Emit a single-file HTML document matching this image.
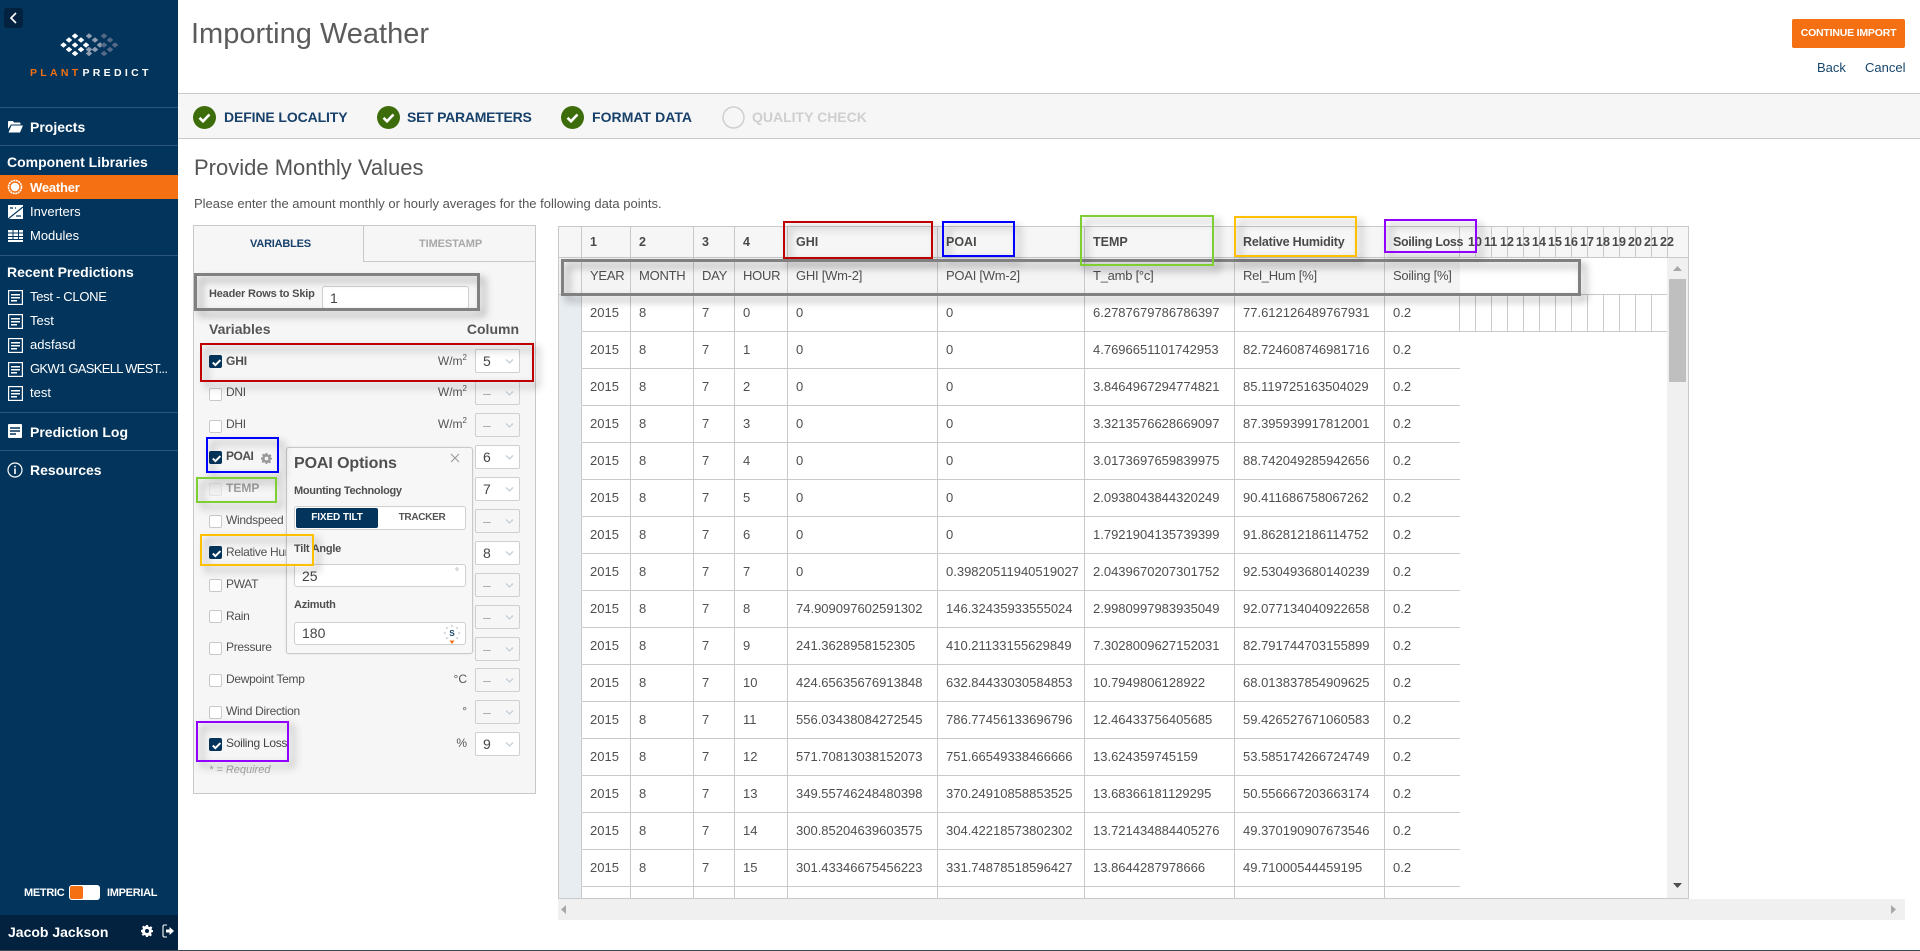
<!DOCTYPE html>
<html lang="en">
<head>
<meta charset="utf-8">
<title>Importing Weather</title>
<style>
*{box-sizing:border-box}
html,body{margin:0;padding:0;width:1920px;height:951px;overflow:hidden;background:#fff}
body{font-family:"Liberation Sans",sans-serif;color:#4a4a4a;position:relative}
.t{position:absolute;white-space:nowrap;line-height:20px}
.abs{position:absolute}
#side{position:absolute;left:0;top:0;width:178px;height:950px;background:#03345b;color:#fff}
#side .t{color:#fff}
#side .h{font-weight:bold;font-size:14px}
#side .i{font-size:13px}
.ln{position:absolute;left:0;width:178px;height:1px;background:#2c557a}
.ico{position:absolute}
.box{position:absolute;background:transparent;border-style:solid;filter:drop-shadow(5px 5px 4px rgba(0,0,0,.38))}
.lab{font-size:14px;font-weight:bold;color:#17406a}
#panel{position:absolute;left:193px;top:225px;width:343px;height:569px;background:#f6f6f6;border:1px solid #c9c9c9}
.cb{position:absolute;left:209px;width:13px;height:13px;border-radius:2px;background:#fff;border:1px solid #c9c9c9}
.cb.on{background:#03345b;border-color:#03345b}
.cb svg{position:absolute;left:1px;top:1px}
.rl{font-size:12px;color:#4f4f4f;left:226px;letter-spacing:-.3px}
.un{font-size:12px;color:#555;right:1453px}
.un sup{font-size:8px;line-height:0}
.sel{position:absolute;left:475px;width:45px;height:24px;border:1px solid #cfcfcf;border-radius:2px;background:#fff;font-size:14px;line-height:22px;padding-left:7px;color:#444}
.sel.off{background:#f6f6f6;color:#aaa}
.sel svg{position:absolute;left:29px;top:8px}
#pop{position:absolute;left:286px;top:447px;width:187px;height:207px;background:#f7f7f7;border:1px solid #c9c9c9;border-radius:3px;box-shadow:0 0 2px rgba(0,0,0,.1)}
.inp{position:absolute;background:#fff;border:1px solid #cfcfcf;border-radius:3px}
.pl{font-size:11px;font-weight:bold;color:#4f4f4f;letter-spacing:-.25px}
#grid{position:absolute;left:558px;top:226px;width:1131px;height:673px;border:1px solid #c9c9c9;overflow:hidden;background:#fff}
#grid .hd{position:absolute;left:0;top:0;width:1130px;height:31px;background:#f6f6f6;border-bottom:1px solid #c9c9c9}
#grid table{position:absolute;left:0;top:0;border-collapse:separate;border-spacing:0;table-layout:fixed;width:1108px;font-size:13px;color:#4f4f4f}
#grid td{padding:0 0 0 8px;border-right:1px solid #c9c9c9;border-bottom:1px solid #c9c9c9;white-space:nowrap;overflow:visible;height:37px;line-height:20px}
#grid tr td:first-child{background:#e8edf1;padding:0;border-bottom-color:#e8edf1}
#grid tr.h1 td{height:31px;font-weight:bold;background:#f6f6f6;font-size:12.5px;color:#4a4a4a}
#grid tr.h1 td:first-child{background:#f6f6f6;border-bottom-color:#c9c9c9}
#grid tr.h2 td{background:#f4f4f4;letter-spacing:-.25px}
#grid tr.h2 td:first-child{background:#f4f4f4;border-bottom-color:#c9c9c9}
#grid tr.h2 td.e{background:#fff;border-right:0}
#grid tr.d td:nth-child(10){border-right:0}
#vs{position:absolute;left:1108px;top:31px;width:21px;height:640px;background:#f0f0f0}
</style>
</head>
<body>

<div id="side">
  <div class="abs" style="left:4px;top:8px;width:19px;height:20px;background:#02223f;border-radius:3px"></div>
  <svg class="ico" style="left:9px;top:11px" width="9" height="14" viewBox="0 0 9 14"><path d="M7 2 L2 7 L7 12" fill="none" stroke="#fff" stroke-width="1.7"/></svg>
  <svg class="ico" style="left:58px;top:31px" width="62" height="28" viewBox="58 31 62 28">
    <g fill="#fff" stroke="#fff" stroke-width=".5"><path d="M75 33.500l3 2.500-3 2.500-3-2.500z"/><path d="M69 37.500l3 2.500-3 2.500-3-2.500zM81 37.500l3 2.500-3 2.500-3-2.500zM63.500 42.500l3 2.500-3 2.500-3-2.500zM75 42.500l3 2.500-3 2.500-3-2.500zM86 42.500l3 2.500-3 2.500-3-2.500zM69 47l3 2.500-3 2.500-3-2.500zM81 47l3 2.500-3 2.500-3-2.500zM75 51l3 2.500-3 2.500-3-2.500z"/></g>
    <g fill="#8f9cb1" stroke="#8f9cb1" stroke-width=".5"><path d="M89 33.500l3 2.500-3 2.500-3-2.500zM95 37.500l3 2.500-3 2.500-3-2.500zM89 47l3 2.500-3 2.500-3-2.500zM95 47l3 2.500-3 2.500-3-2.500zM89 51l3 2.500-3 2.500-3-2.500zM100 42.500l3 2.500-3 2.500-3-2.500z"/></g>
    <g fill="#566a87" stroke="#566a87" stroke-width=".5"><path d="M104 33.500l3 2.500-3 2.500-3-2.500zM110 37.500l3 2.500-3 2.500-3-2.500zM115 42.500l3 2.500-3 2.500-3-2.500zM104 42.500l3 2.500-3 2.500-3-2.500zM110 47l3 2.500-3 2.500-3-2.500zM104 51l3 2.500-3 2.500-3-2.500z"/></g>
  </svg>
  <div class="t" style="left:30px;top:63px;font-size:10.5px;font-weight:bold;letter-spacing:3.3px"><span style="color:#f47012">PLANT</span><span style="color:#fff;margin-left:1px">PREDICT</span></div>

  <div class="ln" style="top:107px"></div>
  <svg class="ico" style="left:8px;top:120px" width="15" height="13" viewBox="0 0 15 13"><path d="M0 3V1.500L1 1h4l1 1.500h6l.5 1v1H3L0 9z" fill="#fff"/><path d="M3.500 5.500H15L12 12.500H.5z" fill="#fff"/></svg>
  <div class="t h" style="left:30px;top:117px">Projects</div>
  <div class="ln" style="top:145px"></div>
  <div class="t h" style="left:7px;top:152px;font-size:14px">Component Libraries</div>
  <div class="abs" style="left:0;top:175px;width:178px;height:24px;background:#f47012"></div>
  <svg class="ico" style="left:7px;top:179px" width="16" height="16" viewBox="0 0 16 16"><circle cx="8" cy="8" r="4.300" fill="#fff"/><circle cx="8" cy="8" r="6.500" fill="none" stroke="#fff" stroke-width="1.600" stroke-dasharray="2 .6"/></svg>
  <div class="t i" style="left:30px;top:178px;font-weight:bold;font-size:13px;letter-spacing:-.2px">Weather</div>
  <svg class="ico" style="left:8px;top:205px" width="15" height="14" viewBox="0 0 15 14"><rect width="15" height="14" fill="#fff"/><path d="M0 14L15 2" stroke="#03345b" stroke-width="1.200"/><path d="M2 3h3M7 3h1M8 11h5" stroke="#03345b" stroke-width="1.200"/></svg>
  <div class="t i" style="left:30px;top:202px">Inverters</div>
  <svg class="ico" style="left:8px;top:230px" width="15" height="12" viewBox="0 0 15 12"><path d="M0 0h4.500v2.500H0zM5.500 0H10v2.500H5.500zM11 0h4v2.500h-4zM0 3.500h4.500V6H0zM5.500 3.500H10V6H5.500zM11 3.500h4V6h-4zM0 7h4.500v2H0zM5.500 7H10v2H5.500zM11 7h4v2h-4zM0 10h15v2H0z" fill="#fff"/></svg>
  <div class="t i" style="left:30px;top:226px">Modules</div>
  <div class="ln" style="top:255px"></div>
  <div class="t h" style="left:7px;top:262px">Recent Predictions</div>

  <svg width="0" height="0" style="position:absolute"><defs><g id="doc"><rect x=".6" y=".6" width="13.800" height="13.800" fill="none" stroke="#fff" stroke-width="1.200"/><path d="M3 4h9v1.500H3zM3 7h9v1.500H3zM3 10h6v1.500H3z" fill="#fff"/></g></defs></svg>
  <svg class="ico" style="left:8px;top:290px" width="15" height="15"><use href="#doc"/></svg>
  <div class="t i" style="left:30px;top:287px;letter-spacing:-.3px">Test - CLONE</div>
  <svg class="ico" style="left:8px;top:314px" width="15" height="15"><use href="#doc"/></svg>
  <div class="t i" style="left:30px;top:311px">Test</div>
  <svg class="ico" style="left:8px;top:338px" width="15" height="15"><use href="#doc"/></svg>
  <div class="t i" style="left:30px;top:335px">adsfasd</div>
  <svg class="ico" style="left:8px;top:362px" width="15" height="15"><use href="#doc"/></svg>
  <div class="t i" style="left:30px;top:359px;letter-spacing:-.7px">GKW1 GASKELL WEST...</div>
  <svg class="ico" style="left:8px;top:386px" width="15" height="15"><use href="#doc"/></svg>
  <div class="t i" style="left:30px;top:383px">test</div>
  <div class="ln" style="top:412px"></div>
  <svg class="ico" style="left:8px;top:424px" width="15" height="15" viewBox="0 0 15 15"><rect width="14" height="14" rx="1" fill="#fff"/><path d="M2 4h10M2 7h10M2 10h6" stroke="#03345b" stroke-width="1.500"/></svg>
  <div class="t h" style="left:30px;top:422px">Prediction Log</div>
  <div class="ln" style="top:450px"></div>
  <svg class="ico" style="left:7px;top:462px" width="16" height="16" viewBox="0 0 16 16"><circle cx="8" cy="8" r="7" fill="none" stroke="#fff" stroke-width="1.200"/><path d="M7.200 6.500h1.600V12H7.200zM7.200 3.800h1.600v1.600H7.200z" fill="#fff"/></svg>
  <div class="t h" style="left:30px;top:460px">Resources</div>

  <div class="t" style="left:24px;top:883px;font-size:11px;font-weight:bold;letter-spacing:-.3px">METRIC</div>
  <div class="abs" style="left:69px;top:885px;width:31px;height:15px;background:#fff;border-radius:3px"></div>
  <div class="abs" style="left:70px;top:886px;width:13px;height:13px;background:#f47012;border-radius:2px"></div>
  <div class="t" style="left:107px;top:883px;font-size:11px;font-weight:bold;letter-spacing:-.3px">IMPERIAL</div>
  <div class="abs" style="left:0;top:915px;width:178px;height:35px;background:#02223f"></div>
  <div class="t h" style="left:8px;top:922px;font-size:14px">Jacob Jackson</div>
  <svg class="ico" style="left:141px;top:925px" width="12" height="12" viewBox="0 0 24 24"><path fill="#fff" d="M10 0h4l.7 3.300 2.300 1 2.900-1.800 2.800 2.800L21 8.200l1 2.300L24 10v4l-3 .7-1 2.300 1.800 2.900-2.800 2.800-2.900-1.800-2.300 1L14 24h-4l-.7-3-2.300-1-2.900 1.800-2.800-2.800L3 17l-1-2.300L0 14v-4l3-.7 1-2.300-1.800-2.900 2.800-2.800L7 3l2.300-1zM12 8a4 4 0 100 8 4 4 0 000-8z"/></svg>
  <svg class="ico" style="left:162px;top:924px" width="12" height="14" viewBox="0 0 12 14"><path d="M5 1H2.500Q1 1 1 2.500v9Q1 13 2.500 13H5" fill="none" stroke="#fff" stroke-width="1.100"/><path d="M4 5.500h3.500V3L12 7l-4.500 4V8.500H4z" fill="#fff"/></svg>
</div>

<div class="t" style="left:191px;top:17px;font-size:29px;line-height:34px;color:#5c5c5c">Importing Weather</div>
<div class="abs" style="left:1792px;top:19px;width:113px;height:29px;background:#f47012;border-radius:2px;color:#fff;font-size:10.5px;font-weight:bold;text-align:center;line-height:29px;letter-spacing:-.2px">CONTINUE IMPORT</div>
<div class="t" style="left:1817px;top:58px;font-size:13px;color:#17466e">Back</div>
<div class="t" style="left:1865px;top:58px;font-size:13px;color:#17466e">Cancel</div>

<div class="abs" style="left:178px;top:93px;width:1742px;height:46px;background:#f6f6f6;border-top:1px solid #cbcbcb;border-bottom:1px solid #cbcbcb"></div>

<svg class="ico" style="left:193px;top:106px" width="23" height="23" viewBox="0 0 23 23"><circle cx="11.500" cy="11.500" r="11.500" fill="#3d6c0b"/><path d="M6.500 11.800l3.500 3.500 6.500-6.800" fill="none" stroke="#fff" stroke-width="2.600"/></svg>
<div class="t lab" style="left:224px;top:107px;letter-spacing:-.12px">DEFINE LOCALITY</div>
<svg class="ico" style="left:377px;top:106px" width="23" height="23" viewBox="0 0 23 23"><circle cx="11.500" cy="11.500" r="11.500" fill="#3d6c0b"/><path d="M6.500 11.800l3.500 3.500 6.500-6.800" fill="none" stroke="#fff" stroke-width="2.600"/></svg>
<div class="t lab" style="left:407px;top:107px;letter-spacing:-.25px">SET PARAMETERS</div>
<svg class="ico" style="left:561px;top:106px" width="23" height="23" viewBox="0 0 23 23"><circle cx="11.500" cy="11.500" r="11.500" fill="#3d6c0b"/><path d="M6.500 11.800l3.500 3.500 6.500-6.800" fill="none" stroke="#fff" stroke-width="2.600"/></svg>
<div class="t lab" style="left:592px;top:107px;letter-spacing:.05px">FORMAT DATA</div>
<svg class="ico" style="left:722px;top:106px" width="23" height="23" viewBox="0 0 23 23"><circle cx="11.500" cy="11.500" r="10.500" fill="none" stroke="#cfcfcf" stroke-width="1.500"/></svg>
<div class="t lab" style="left:752px;top:107px;color:#cfcfcf">QUALITY CHECK</div>

<div class="t" style="left:194px;top:156px;font-size:22px;line-height:24px;color:#555">Provide Monthly Values</div>
<div class="t" style="left:194px;top:194px;font-size:13px;color:#555">Please enter the amount monthly or hourly averages for the following data points.</div>

<div id="panel"></div>
<div class="abs" style="left:363px;top:225px;width:173px;height:37px;border:1px solid #c9c9c9;background:#f6f6f6"></div>
<div class="t" style="left:250px;top:234px;font-size:11px;font-weight:bold;color:#17406a;letter-spacing:-.2px">VARIABLES</div>
<div class="t" style="left:419px;top:234px;font-size:11px;font-weight:bold;color:#a8a8a8;letter-spacing:-.1px">TIMESTAMP</div>

<div class="t" style="left:209px;top:284px;font-size:11px;font-weight:bold;color:#4f4f4f;letter-spacing:-.2px">Header Rows to Skip</div>
<div class="inp" style="left:322px;top:286px;width:147px;height:23px;font-size:14px;line-height:23px;padding-left:7px;color:#444">1</div>
<div class="t" style="left:209px;top:319px;font-size:14px;font-weight:bold;color:#555">Variables</div>
<div class="t" style="right:1401px;top:319px;font-size:14px;font-weight:bold;color:#555">Column</div>

<!-- rows -->
<div class="cb on" style="top:355px"><svg width="11" height="11" viewBox="0 0 11 11"><path d="M1.800 5.500l2.600 2.600 5-5" fill="none" stroke="#fff" stroke-width="2"/></svg></div>
<div class="t rl" style="top:351px;font-weight:bold;letter-spacing:-.1px">GHI</div>
<div class="t un" style="top:351px">W/m<sup>2</sup></div>
<div class="sel" style="top:349px">5<svg width="9" height="7" viewBox="0 0 9 7"><path d="M1 1.500l3.500 3.500L8 1.500" fill="none" stroke="#c5ced8" stroke-width="1.300"/></svg></div>

<div class="cb" style="top:388px"></div>
<div class="t rl" style="top:382px">DNI</div>
<div class="t un" style="top:382px">W/m<sup>2</sup></div>
<div class="sel off" style="top:381px">–<svg width="9" height="7" viewBox="0 0 9 7"><path d="M1 1.500l3.500 3.500L8 1.500" fill="none" stroke="#c5ced8" stroke-width="1.300"/></svg></div>

<div class="cb" style="top:420px"></div>
<div class="t rl" style="top:414px">DHI</div>
<div class="t un" style="top:414px">W/m<sup>2</sup></div>
<div class="sel off" style="top:413px">–<svg width="9" height="7" viewBox="0 0 9 7"><path d="M1 1.500l3.500 3.500L8 1.500" fill="none" stroke="#c5ced8" stroke-width="1.300"/></svg></div>

<div class="cb on" style="top:451px"><svg width="11" height="11" viewBox="0 0 11 11"><path d="M1.800 5.500l2.600 2.600 5-5" fill="none" stroke="#fff" stroke-width="2"/></svg></div>
<div class="t rl" style="top:446px;font-weight:bold;letter-spacing:-.5px">POAI</div>
<svg class="ico" style="left:261px;top:453px" width="11" height="11" viewBox="0 0 24 24"><path fill="#9a9a9a" d="M10 0h4l.7 3.300 2.300 1 2.900-1.800 2.800 2.800L21 8.200l1 2.300L24 10v4l-3 .7-1 2.300 1.800 2.900-2.800 2.800-2.900-1.800-2.300 1L14 24h-4l-.7-3-2.300-1-2.900 1.800-2.800-2.800L3 17l-1-2.300L0 14v-4l3-.7 1-2.300-1.800-2.900 2.800-2.800L7 3l2.300-1zM12 8a4 4 0 100 8 4 4 0 000-8z"/></svg>
<div class="sel" style="top:445px">6<svg width="9" height="7" viewBox="0 0 9 7"><path d="M1 1.500l3.500 3.500L8 1.500" fill="none" stroke="#c5ced8" stroke-width="1.300"/></svg></div>

<div class="cb" style="top:483px;background:#f1f1f1;border-color:#e4e4e4"></div>
<div class="t rl" style="top:478px;font-weight:bold;color:#a0a0a0;letter-spacing:0">TEMP</div>
<div class="sel" style="top:477px">7<svg width="9" height="7" viewBox="0 0 9 7"><path d="M1 1.500l3.500 3.500L8 1.500" fill="none" stroke="#c5ced8" stroke-width="1.300"/></svg></div>

<div class="cb" style="top:515px"></div>
<div class="t rl" style="top:510px">Windspeed</div>
<div class="sel off" style="top:509px">–<svg width="9" height="7" viewBox="0 0 9 7"><path d="M1 1.500l3.500 3.500L8 1.500" fill="none" stroke="#c5ced8" stroke-width="1.300"/></svg></div>

<div class="cb on" style="top:546px"><svg width="11" height="11" viewBox="0 0 11 11"><path d="M1.800 5.500l2.600 2.600 5-5" fill="none" stroke="#fff" stroke-width="2"/></svg></div>
<div class="t rl" style="top:542px">Relative Humidity</div>
<div class="sel" style="top:541px">8<svg width="9" height="7" viewBox="0 0 9 7"><path d="M1 1.500l3.500 3.500L8 1.500" fill="none" stroke="#c5ced8" stroke-width="1.300"/></svg></div>

<div class="cb" style="top:579px"></div>
<div class="t rl" style="top:574px">PWAT</div>
<div class="sel off" style="top:573px">–<svg width="9" height="7" viewBox="0 0 9 7"><path d="M1 1.500l3.500 3.500L8 1.500" fill="none" stroke="#c5ced8" stroke-width="1.300"/></svg></div>

<div class="cb" style="top:610px"></div>
<div class="t rl" style="top:606px">Rain</div>
<div class="sel off" style="top:605px">–<svg width="9" height="7" viewBox="0 0 9 7"><path d="M1 1.500l3.500 3.500L8 1.500" fill="none" stroke="#c5ced8" stroke-width="1.300"/></svg></div>

<div class="cb" style="top:642px"></div>
<div class="t rl" style="top:637px">Pressure</div>
<div class="sel off" style="top:637px">–<svg width="9" height="7" viewBox="0 0 9 7"><path d="M1 1.500l3.500 3.500L8 1.500" fill="none" stroke="#c5ced8" stroke-width="1.300"/></svg></div>

<div class="cb" style="top:674px"></div>
<div class="t rl" style="top:669px">Dewpoint Temp</div>
<div class="t un" style="top:669px">°C</div>
<div class="sel off" style="top:668px">–<svg width="9" height="7" viewBox="0 0 9 7"><path d="M1 1.500l3.500 3.500L8 1.500" fill="none" stroke="#c5ced8" stroke-width="1.300"/></svg></div>

<div class="cb" style="top:706px"></div>
<div class="t rl" style="top:701px">Wind Direction</div>
<div class="t un" style="top:701px">°</div>
<div class="sel off" style="top:700px">–<svg width="9" height="7" viewBox="0 0 9 7"><path d="M1 1.500l3.500 3.500L8 1.500" fill="none" stroke="#c5ced8" stroke-width="1.300"/></svg></div>

<div class="cb on" style="top:738px"><svg width="11" height="11" viewBox="0 0 11 11"><path d="M1.800 5.500l2.600 2.600 5-5" fill="none" stroke="#fff" stroke-width="2"/></svg></div>
<div class="t rl" style="top:733px;color:#444">Soiling Loss</div>
<div class="t un" style="top:733px">%</div>
<div class="sel" style="top:732px">9<svg width="9" height="7" viewBox="0 0 9 7"><path d="M1 1.500l3.500 3.500L8 1.500" fill="none" stroke="#c5ced8" stroke-width="1.300"/></svg></div>

<div class="t" style="left:209px;top:760px;font-size:11px;font-style:italic;color:#a5a5a5">* = Required</div>

<!-- popup -->
<div id="pop"></div>
<div class="t" style="left:294px;top:454px;font-size:16px;font-weight:bold;color:#4f4f4f;letter-spacing:-.1px">POAI Options</div>
<svg class="ico" style="left:450px;top:453px" width="10" height="10" viewBox="0 0 10 10"><path d="M1 1l8 8M9 1l-8 8" stroke="#9a9a9a" stroke-width="1.100"/></svg>
<div class="t pl" style="left:294px;top:481px;letter-spacing:-.3px">Mounting Technology</div>
<div class="inp" style="left:294px;top:506px;width:172px;height:24px"></div>
<div class="abs" style="left:296px;top:508px;width:82px;height:20px;background:#03345b;border-radius:2px;color:#fff;font-size:10px;font-weight:bold;text-align:center;line-height:20px;letter-spacing:-.1px">FIXED TILT</div>
<div class="t" style="left:378px;width:88px;top:508px;text-align:center;font-size:10px;font-weight:bold;color:#555;letter-spacing:-.3px">TRACKER</div>
<div class="t pl" style="left:294px;top:539px">Tilt Angle</div>
<div class="inp" style="left:294px;top:564px;width:172px;height:23px;font-size:14px;line-height:22px;padding-left:7px;color:#444">25<span style="position:absolute;right:6px;top:-3px;font-size:10px;color:#999">°</span></div>
<div class="t pl" style="left:294px;top:595px">Azimuth</div>
<div class="inp" style="left:294px;top:622px;width:172px;height:23px;font-size:14px;line-height:21px;padding-left:7px;color:#444">180</div>
<svg class="ico" style="left:442px;top:623px" width="20" height="22" viewBox="0 0 20 22">
  <g fill="#c3cbd3">
    <path d="M10 1.500l1.500 2h-3z"/>
    <path d="M10 1.500l1.500 2h-3z" transform="rotate(45 10 10)"/>
    <path d="M10 1.500l1.500 2h-3z" transform="rotate(90 10 10)"/>
    <path d="M10 1.500l1.500 2h-3z" transform="rotate(135 10 10)"/>
    <path d="M10 1.500l1.500 2h-3z" transform="rotate(225 10 10)"/>
    <path d="M10 1.500l1.500 2h-3z" transform="rotate(270 10 10)"/>
    <path d="M10 1.500l1.500 2h-3z" transform="rotate(315 10 10)"/>
  </g>
  <path d="M7.500 17.500h5l-2.500 3.500z" fill="#f47012"/>
  <text x="10" y="13" text-anchor="middle" font-family="Liberation Sans, sans-serif" font-size="8" font-weight="bold" fill="#17406a">S</text>
</svg>

<!-- table -->
<div id="grid">
  <div class="hd"></div>
  <table>
    <colgroup><col style="width:23px"><col style="width:49px"><col style="width:63px"><col style="width:41px"><col style="width:53px"><col style="width:150px"><col style="width:147px"><col style="width:150px"><col style="width:150px"><col style="width:75px"><col style="width:16px"><col style="width:16px"><col style="width:16px"><col style="width:16px"><col style="width:16px"><col style="width:16px"><col style="width:16px"><col style="width:16px"><col style="width:16px"><col style="width:16px"><col style="width:16px"><col style="width:16px"><col style="width:16px"></colgroup>
    <tr class="h1"><td></td><td>1</td><td>2</td><td>3</td><td>4</td><td>GHI</td><td>POAI</td><td>TEMP</td><td style="letter-spacing:-.2px">Relative Humidity</td><td style="letter-spacing:-.35px">Soiling Loss</td><td>10</td><td>11</td><td>12</td><td>13</td><td>14</td><td>15</td><td>16</td><td>17</td><td>18</td><td>19</td><td>20</td><td>21</td><td>22</td></tr>
    <tr class="h2"><td></td><td>YEAR</td><td>MONTH</td><td>DAY</td><td>HOUR</td><td>GHI [Wm-2]</td><td>POAI [Wm-2]</td><td>T_amb [°c]</td><td>Rel_Hum [%]</td><td style="border-right:0">Soiling [%]</td><td class="e" colspan="13"></td></tr>
    <tr><td></td><td>2015</td><td>8</td><td>7</td><td>0</td><td>0</td><td>0</td><td>6.2787679786786397</td><td>77.612126489767931</td><td>0.2</td><td></td><td></td><td></td><td></td><td></td><td></td><td></td><td></td><td></td><td></td><td></td><td></td><td></td></tr>
    <tr class="d"><td></td><td>2015</td><td>8</td><td>7</td><td>1</td><td>0</td><td>0</td><td>4.7696651101742953</td><td>82.724608746981716</td><td>0.2</td></tr>
    <tr class="d"><td></td><td>2015</td><td>8</td><td>7</td><td>2</td><td>0</td><td>0</td><td>3.8464967294774821</td><td>85.119725163504029</td><td>0.2</td></tr>
    <tr class="d"><td></td><td>2015</td><td>8</td><td>7</td><td>3</td><td>0</td><td>0</td><td>3.3213576628669097</td><td>87.395939917812001</td><td>0.2</td></tr>
    <tr class="d"><td></td><td>2015</td><td>8</td><td>7</td><td>4</td><td>0</td><td>0</td><td>3.0173697659839975</td><td>88.742049285942656</td><td>0.2</td></tr>
    <tr class="d"><td></td><td>2015</td><td>8</td><td>7</td><td>5</td><td>0</td><td>0</td><td>2.0938043844320249</td><td>90.411686758067262</td><td>0.2</td></tr>
    <tr class="d"><td></td><td>2015</td><td>8</td><td>7</td><td>6</td><td>0</td><td>0</td><td>1.7921904135739399</td><td>91.862812186114752</td><td>0.2</td></tr>
    <tr class="d"><td></td><td>2015</td><td>8</td><td>7</td><td>7</td><td>0</td><td>0.39820511940519027</td><td>2.0439670207301752</td><td>92.530493680140239</td><td>0.2</td></tr>
    <tr class="d"><td></td><td>2015</td><td>8</td><td>7</td><td>8</td><td>74.909097602591302</td><td>146.32435933555024</td><td>2.9980997983935049</td><td>92.077134040922658</td><td>0.2</td></tr>
    <tr class="d"><td></td><td>2015</td><td>8</td><td>7</td><td>9</td><td>241.3628958152305</td><td>410.21133155629849</td><td>7.3028009627152031</td><td>82.791744703155899</td><td>0.2</td></tr>
    <tr class="d"><td></td><td>2015</td><td>8</td><td>7</td><td>10</td><td>424.65635676913848</td><td>632.84433030584853</td><td>10.7949806128922</td><td>68.013837854909625</td><td>0.2</td></tr>
    <tr class="d"><td></td><td>2015</td><td>8</td><td>7</td><td>11</td><td>556.03438084272545</td><td>786.77456133696796</td><td>12.46433756405685</td><td>59.426527671060583</td><td>0.2</td></tr>
    <tr class="d"><td></td><td>2015</td><td>8</td><td>7</td><td>12</td><td>571.70813038152073</td><td>751.66549338466666</td><td>13.624359745159</td><td>53.585174266724749</td><td>0.2</td></tr>
    <tr class="d"><td></td><td>2015</td><td>8</td><td>7</td><td>13</td><td>349.55746248480398</td><td>370.24910858853525</td><td>13.68366181129295</td><td>50.556667203663174</td><td>0.2</td></tr>
    <tr class="d"><td></td><td>2015</td><td>8</td><td>7</td><td>14</td><td>300.85204639603575</td><td>304.42218573802302</td><td>13.721434884405276</td><td>49.370190907673546</td><td>0.2</td></tr>
    <tr class="d"><td></td><td>2015</td><td>8</td><td>7</td><td>15</td><td>301.43346675456223</td><td>331.74878518596427</td><td>13.8644287978666</td><td>49.71000544459195</td><td>0.2</td></tr>
    <tr class="d"><td></td><td></td><td></td><td></td><td></td><td></td><td></td><td></td><td></td><td></td></tr>
  </table>
  <div id="vs">
    <svg class="ico" style="left:5px;top:8px" width="11" height="6"><path d="M5.500 0L10 5H1z" fill="#a8a8a8"/></svg>
    <div class="abs" style="left:2px;top:21px;width:17px;height:103px;background:#bfbfbf"></div>
    <svg class="ico" style="left:5px;top:625px" width="11" height="6"><path d="M1 0h9L5.500 5z" fill="#505050"/></svg>
  </div>
</div>
<div class="abs" style="left:558px;top:899px;width:1347px;height:21px;background:#f0f0f0"></div>
<svg class="ico" style="left:561px;top:904px" width="6" height="11"><path d="M5 1v9L0 5.500z" fill="#a8a8a8"/></svg>
<svg class="ico" style="left:1891px;top:904px" width="6" height="11"><path d="M0 1v9l5-4.500z" fill="#a8a8a8"/></svg>

<!-- annotation boxes -->
<div class="box" style="left:194px;top:273px;width:286px;height:38px;border-width:3px;border-color:#808080"></div>
<div class="box" style="left:200px;top:343px;width:334px;height:39px;border-width:2px;border-color:#c00000"></div>
<div class="box" style="left:206px;top:437px;width:73px;height:36px;border-width:2px;border-color:#0000ff"></div>
<div class="box" style="left:196px;top:477px;width:81px;height:26px;border-width:2px;border-color:#7ed032"></div>
<div class="box" style="left:200px;top:534px;width:114px;height:32px;border-width:2px;border-color:#ffc000"></div>
<div class="box" style="left:196px;top:721px;width:93px;height:41px;border-width:2px;border-color:#9000ff"></div>
<div class="box" style="left:783px;top:221px;width:150px;height:38px;border-width:2px;border-color:#c00000"></div>
<div class="box" style="left:942px;top:221px;width:73px;height:36px;border-width:2px;border-color:#0000ff"></div>
<div class="box" style="left:561px;top:259px;width:1020px;height:37px;border-width:3px;border-color:#808080"></div>
<div class="box" style="left:1080px;top:215px;width:134px;height:51px;border-width:2px;border-color:#7ed032"></div>
<div class="box" style="left:1234px;top:216px;width:123px;height:41px;border-width:2px;border-color:#ffc000"></div>
<div class="box" style="left:1384px;top:219px;width:93px;height:34px;border-width:2px;border-color:#9000ff"></div>

<div class="abs" style="left:0;top:950px;width:1920px;height:1px;background:#3a4a55"></div>
</body>
</html>
